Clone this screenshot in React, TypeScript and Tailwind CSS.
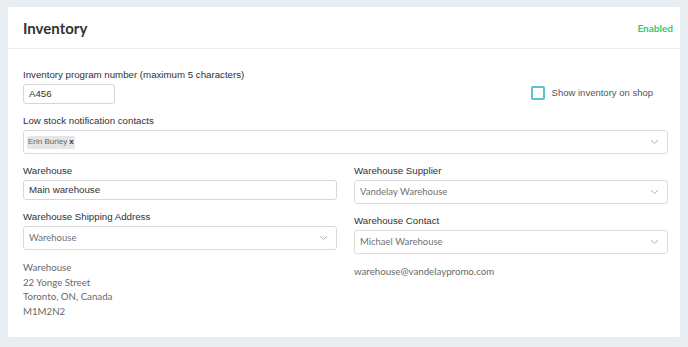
import React from "react";

const Chevron = () => (
  <svg width="9" height="6" viewBox="0 0 9 6" className="shrink-0">
    <path d="M1 1.2 L4.5 4.6 L8 1.2" fill="none" stroke="#aab2b8" strokeWidth="1" />
  </svg>
);

const Label = ({ children }: { children: React.ReactNode }) => (
  <div className="text-[9.7px] leading-[14px] text-[#2d3134] mb-[2px]" style={{ fontFamily: '"Liberation Sans", Arial, sans-serif' }}>
    {children}
  </div>
);

const Select = ({ value }: { value: string }) => (
  <div className="h-[24px] border border-[#d9dde0] rounded-[3px] flex items-center justify-between pl-[5px] pr-[8px] bg-white">
    <span className="text-[9.5px] text-[#6f7375]" style={{ fontFamily: 'Lato, sans-serif' }}>{value}</span>
    <Chevron />
  </div>
);

const Input = ({ value, w }: { value: string; w?: string }) => (
  <div className={`h-[20px] border border-[#d4d8db] rounded-[3px] flex items-center pl-[5px] bg-white ${w ?? ""}`}>
    <span className="text-[9.7px] text-[#333]" style={{ fontFamily: '"Liberation Sans", Arial, sans-serif' }}>{value}</span>
  </div>
);

export default function App() {
  return (
    <div className="w-[688px] h-[347px] bg-[#e8eef1] pt-[7px] pl-[8px]">
      <div className="w-[672px] h-[330px] bg-white rounded-[2px]">
        <div className="h-[42px] border-b border-[#eceff1] flex items-center justify-between pl-[15px] pr-[7px]">
          <span className="text-[15px] font-bold text-[#2f3336] pt-[2px]" style={{ fontFamily: 'Lato, sans-serif' }}>Inventory</span>
          <span className="text-[10px] font-bold text-[#2ecc71] pt-[2px]" style={{ fontFamily: 'Lato, sans-serif' }}>Enabled</span>
        </div>
        <div className="pl-[15px] pr-[12px] pt-[19px]">
          <div className="flex items-end justify-between">
            <div>
              <Label>Inventory program number (maximum 5 characters)</Label>
              <Input value="A456" w="w-[92px]" />
            </div>
            <div className="flex items-center gap-[7px] pr-[15px] mb-[4px]">
              <div className="w-[14px] h-[14px] border-2 border-[#58c2d3] rounded-[2px]" />
              <span className="text-[9.5px] text-[#555]" style={{ fontFamily: '"Liberation Sans", Arial, sans-serif' }}>Show inventory on shop</span>
            </div>
          </div>
          <div className="mt-[10px]">
            <Label>Low stock notification contacts</Label>
            <div className="h-[24px] border border-[#d9dde0] rounded-[3px] flex items-center justify-between pl-[3px] pr-[8px]">
              <span className="bg-[#e4e6e8] rounded-[2px] px-[1px] h-[13px] flex items-center gap-[2px] text-[8px] text-[#666]" style={{ fontFamily: '"Liberation Sans", Arial, sans-serif' }}>
                Erin Burley <span className="font-bold text-[#333]">x</span>
              </span>
              <Chevron />
            </div>
          </div>
          <div className="grid grid-cols-2 gap-x-[17px] mt-[10px]">
            <div className="flex flex-col gap-[10px]">
              <div>
                <Label>Warehouse</Label>
                <Input value="Main warehouse" />
              </div>
              <div>
                <Label>Warehouse Shipping Address</Label>
                <Select value="Warehouse" />
              </div>
              <div className="text-[9.7px] leading-[14.5px] text-[#666a6d]" style={{ fontFamily: 'Lato, sans-serif' }}>
                <div>Warehouse</div>
                <div>22 Yonge Street</div>
                <div>Toronto, ON, Canada</div>
                <div>M1M2N2</div>
              </div>
            </div>
            <div className="flex flex-col gap-[10px]">
              <div>
                <Label>Warehouse Supplier</Label>
                <Select value="Vandelay Warehouse" />
              </div>
              <div>
                <Label>Warehouse Contact</Label>
                <Select value="Michael Warehouse" />
              </div>
              <div className="text-[9.7px] leading-[14.5px] text-[#666a6d]" style={{ fontFamily: 'Lato, sans-serif' }}>
                warehouse@vandelaypromo.com
              </div>
            </div>
          </div>
        </div>
      </div>
    </div>
  );
}
